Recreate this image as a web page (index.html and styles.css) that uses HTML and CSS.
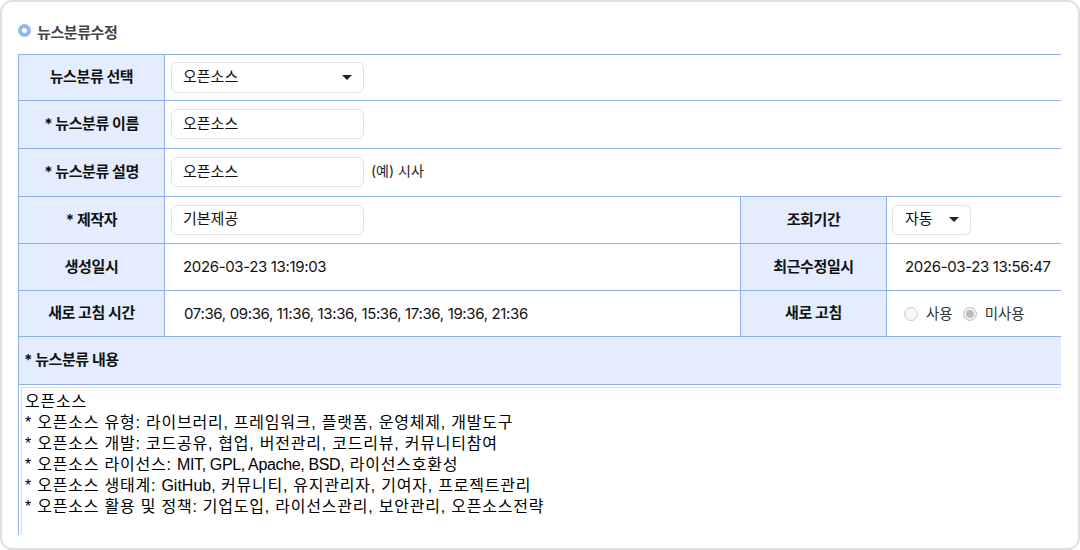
FILE: index.html
```html
<!DOCTYPE html>
<html lang="ko">
<head>
<meta charset="utf-8">
<title>뉴스분류수정</title>
<link rel="stylesheet" href="styles.css">
</head>
<body>
<main class="card">
  <h2 class="title"><span class="bullet"></span><span class="title-text">뉴스분류수정</span></h2>
  <div class="clip">
    <table class="form">
      <colgroup><col class="c1"><col class="c2"><col class="c3"><col class="c4"></colgroup>
      <tr class="h46">
        <th><span class="up">뉴스분류 선택</span></th>
        <td colspan="3"><div class="field sel tall w193"><span class="up">오픈소스</span><i class="caret"></i></div></td>
      </tr>
      <tr class="h48">
        <th><span class="up">* 뉴스분류 이름</span></th>
        <td colspan="3"><div class="field w193"><span class="up">오픈소스</span></div></td>
      </tr>
      <tr class="h48">
        <th><span class="up">* 뉴스분류 설명</span></th>
        <td colspan="3"><div class="inline"><div class="field w193"><span class="up">오픈소스</span></div><span class="hint">(예) 시사</span></div></td>
      </tr>
      <tr class="h47">
        <th><span class="up">* 제작자</span></th>
        <td><div class="field w193"><span class="up">기본제공</span></div></td>
        <th><span class="up">조회기간</span></th>
        <td><div class="field sel w79"><span class="up">자동</span><i class="caret"></i></div></td>
      </tr>
      <tr class="h47">
        <th><span class="up">생성일시</span></th>
        <td class="val">2026-03-23 13:19:03</td>
        <th><span class="up">최근수정일시</span></th>
        <td class="val">2026-03-23 13:56:47</td>
      </tr>
      <tr class="h46">
        <th><span class="up">새로 고침 시간</span></th>
        <td class="val times">07:36, 09:36, 11:36, 13:36, 15:36, 17:36, 19:36, 21:36</td>
        <th><span class="up">새로 고침</span></th>
        <td>
          <div class="radios">
            <span class="radio"></span><span class="rlabel">사용</span>
            <span class="radio on"></span><span class="rlabel">미사용</span>
          </div>
        </td>
      </tr>
      <tr class="h48">
        <th class="left" colspan="4"><span class="up">* 뉴스분류 내용</span></th>
      </tr>
    </table>
    <div class="area-wrap">
      <div class="area">
        <div class="line">오픈소스</div>
        <div class="line">* 오픈소스 유형: 라이브러리, 프레임워크, 플랫폼, 운영체제, 개발도구</div>
        <div class="line">* 오픈소스 개발: 코드공유, 협업, 버전관리, 코드리뷰, 커뮤니티참여</div>
        <div class="line">* 오픈소스 라이선스: <span class="latin">MIT, GPL, Apache, BSD,</span> 라이선스호환성</div>
        <div class="line">* 오픈소스 생태계: <span class="latin-wide">GitHub,</span> 커뮤니티, 유지관리자, 기여자, 프로젝트관리</div>
        <div class="line">* 오픈소스 활용 및 정책: 기업도입, 라이선스관리, 보안관리, 오픈소스전략</div>
      </div>
    </div>
  </div>
</main>
</body>
</html>
```

FILE: styles.css
```css
* { box-sizing: border-box; }
html, body { margin: 0; padding: 0; background: #fff; }
body {
  width: 1080px;
  height: 550px;
  overflow: hidden;
  font-family: "Inter", "Noto Sans CJK KR", sans-serif;
  color: #111;
}
.card {
  width: 1080px;
  height: 550px;
  border: 2px solid #e0e0e0;
  border-radius: 12px;
  padding: 22px 17px 0 16px;
  background: #fff;
}
.title {
  display: flex;
  align-items: center;
  height: 18px;
  margin: 0 0 12px;
  font-size: 15px;
  font-weight: 700;
  color: #444;
  letter-spacing: -0.4px;
}
.title-text { margin-top: -3px; }
.bullet {
  width: 13px;
  height: 13px;
  margin: -5px 6px 0 0;
  border-radius: 50%;
  border: 4px solid #8db9f0;
  background: #fff;
}
.clip {
  width: 1043px;
  height: 481px;
  overflow: hidden;
  border-left: 1px solid #8fb3e8;
}
.form {
  width: 1044px;
  margin-left: -1px;
  border-collapse: collapse;
  table-layout: fixed;
}
.c1 { width: 146px; }
.c2 { width: 576px; }
.c3 { width: 146px; }
.form th, .form td {
  border: 1px solid #8fb3e8;
  padding: 0;
  font-size: 15px;
}
.form th {
  background: #e3edfd;
  font-weight: 700;
  color: #111;
  text-align: center;
  letter-spacing: -0.4px;
}
.up { position: relative; top: -2px; }
.form th.left { text-align: left; padding-left: 5px; }
.form td { padding-left: 6px; background: #fff; }
.form td.val { padding-left: 18px; padding-bottom: 1px; letter-spacing: -0.35px; color: #111; }
.form td.times { padding-left: 19px; }
.h46 { height: 46px; }
.h47 { height: 47px; }
.h48 { height: 48px; }
.field {
  display: flex;
  align-items: center;
  justify-content: space-between;
  height: 30px;
  margin-top: -1px;
  padding: 0 12px 0 11px;
  border: 1px solid #e2e2e2;
  border-radius: 6px;
  background: #fff;
  font-size: 15px;
  color: #111;
}
.tall { height: 31px; }
.w193 { width: 193px; }
.w79 { width: 79px; margin-left: -1px; padding-left: 12px; }
.caret {
  width: 0;
  height: 0;
  border-left: 5px solid transparent;
  border-right: 5px solid transparent;
  border-top: 5px solid #222;
  margin-right: -1px;
}
.inline { display: flex; align-items: center; gap: 7px; }
.hint { font-size: 14px; color: #222; margin-top: -5px; }
.radios {
  display: flex;
  align-items: center;
  padding-left: 11px;
  font-size: 14.5px;
  color: #333;
}
.radio {
  width: 14px;
  height: 14px;
  border: 1px solid #ccc;
  border-radius: 50%;
  background: #f6f6f6;
  margin-right: 8px;
}
.radio.on {
  background: #bbb;
  box-shadow: inset 0 0 0 2px #f4f4f4;
}
.rlabel { margin-right: 10px; position: relative; top: -1px; }
.area-wrap { height: 152px; padding-top: 2px; margin-left: 2px; }
.area {
  height: 200px;
  border: 1px solid #dcdcdc;
  border-right: 0;
  padding: 3px 3px;
  font-family: "Liberation Sans", "Noto Sans CJK KR", sans-serif;
  font-size: 16px;
  letter-spacing: 0.78px;
  color: #000;
}
.line { height: 21px; line-height: 21px; white-space: pre; }
.latin { letter-spacing: -0.35px; }
.latin-wide { letter-spacing: 0; }
```
